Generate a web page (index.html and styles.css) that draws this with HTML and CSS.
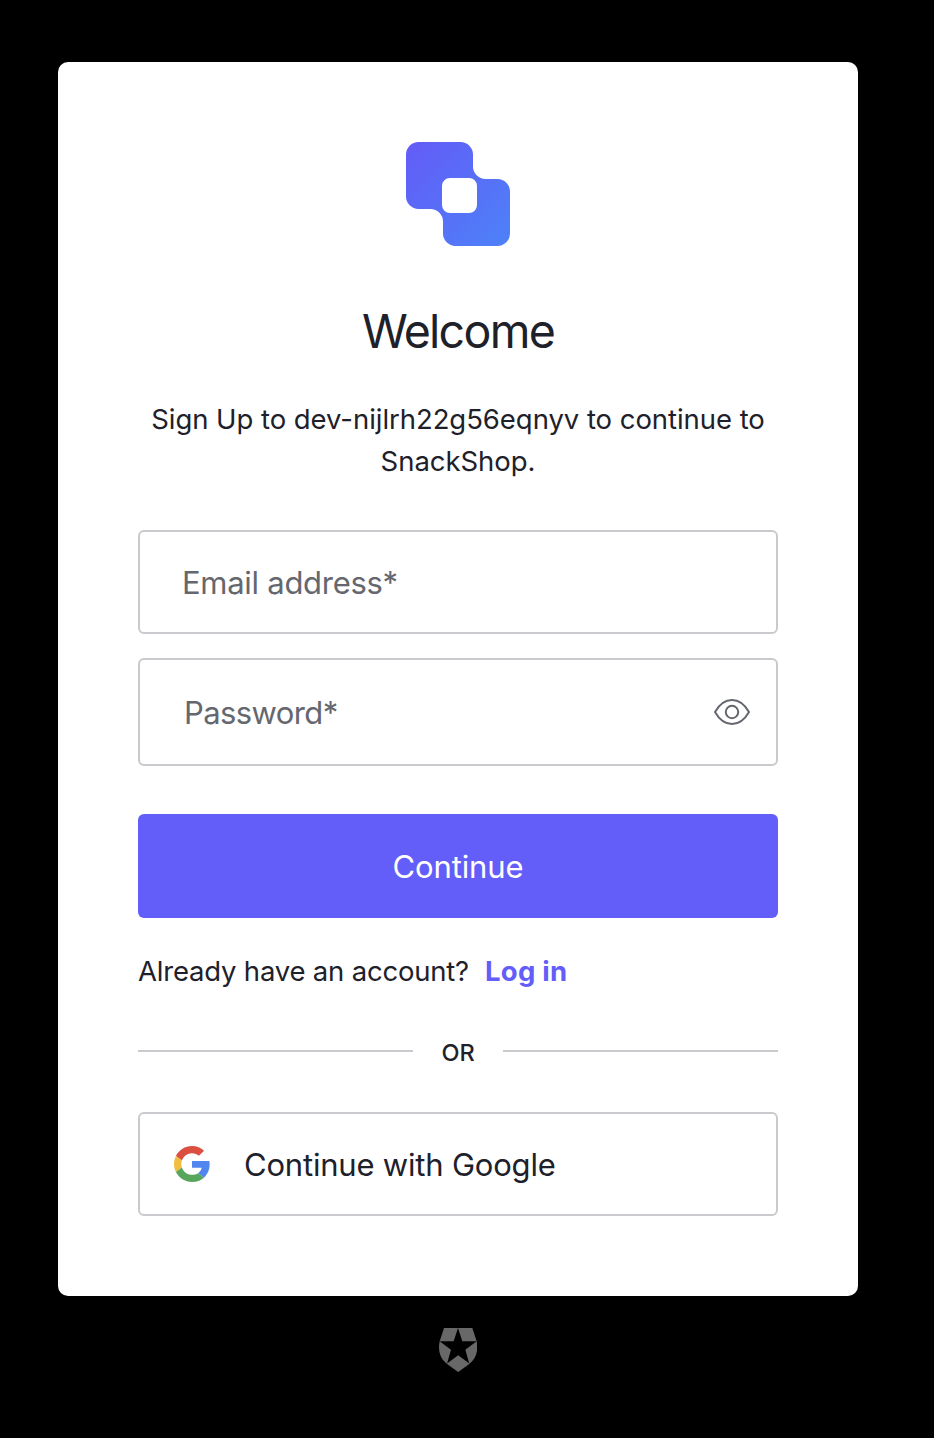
FILE: index.html
```html
<!DOCTYPE html>
<html lang="en">
<head>
<meta charset="utf-8">
<title>Sign Up</title>
<link rel="stylesheet" href="styles.css">
</head>
<body>
<main class="card">
  <svg class="logo" viewBox="0 0 104 104" role="img" aria-label="SnackShop">
    <defs><linearGradient id="brand" x1="0" y1="0" x2="1" y2="1"><stop offset="0" stop-color="#635bf7"/><stop offset="1" stop-color="#4d82f8"/></linearGradient></defs>
    <path fill="url(#brand)" fill-rule="evenodd" d="M12.500 0H54.500A12.500 12.500 0 0 1 67 12.500V24.500A12.500 12.500 0 0 0 79.500 37H91.500A12.500 12.500 0 0 1 104 49.500V91.500A12.500 12.500 0 0 1 91.500 104H49.500A12.500 12.500 0 0 1 37 91.500V79.500A12.500 12.500 0 0 0 24.500 67H12.500A12.500 12.500 0 0 1 0 54.500V12.500A12.500 12.500 0 0 1 12.500 0ZM44 36A8 8 0 0 0 36 44V63A8 8 0 0 0 44 71H63A8 8 0 0 0 71 63V44A8 8 0 0 0 63 36Z"/>
  </svg>
  <h1 class="title">Welcome</h1>
  <p class="intro">Sign Up to dev-nijlrh22g56eqnyv to continue to<br>SnackShop.</p>
  <form class="form">
    <div class="field"><input class="input email" type="email" placeholder="Email address*" aria-label="Email address"></div>
    <div class="field field-password">
      <input class="input password" type="password" placeholder="Password*" aria-label="Password">
      <svg class="eye" viewBox="0 0 36 26" fill="none" stroke="#65676e" stroke-width="2"><path d="M1 13C5 6 11 1 18 1S31 6 35 13C31 20 25 25 18 25S5 20 1 13Z"/><circle cx="18" cy="13" r="6.2"/></svg>
    </div>
    <button class="submit" type="button">Continue</button>
  </form>
  <p class="switch"><span class="question">Already have an account?</span><a class="login" href="#">Log in</a></p>
  <div class="divider"><span>OR</span></div>
  <button class="social" type="button">
    <svg class="google" viewBox="0 0 48 48"><path fill="#db4f40" d="M24 9.5c3.54 0 6.71 1.22 9.21 3.6l6.85-6.85C35.9 2.38 30.47 0 24 0 14.62 0 6.51 5.38 2.56 13.22l7.98 6.19C12.43 13.72 17.74 9.5 24 9.5z"/><path fill="#5186ee" d="M47.5 24.55c0-1.57-.15-3.09-.38-4.55H24v9.02h12.94c-.58 2.96-2.26 5.48-4.78 7.18l7.73 6c4.51-4.18 7.61-10.36 7.61-17.65z"/><path fill="#f2be42" d="M10.53 28.59c-.48-1.45-.76-2.99-.76-4.59s.27-3.14.76-4.59l-7.98-6.19C.92 16.46 0 20.12 0 24c0 3.88.92 7.54 2.56 10.78l7.97-6.19z"/><path fill="#58a55c" d="M24 48c6.48 0 11.93-2.13 15.89-5.81l-7.73-6c-2.15 1.45-4.92 2.3-8.16 2.3-6.26 0-11.57-4.22-13.47-9.91l-7.98 6.19C6.51 42.62 14.62 48 24 48z"/></svg>
    <span class="social-label">Continue with Google</span>
  </button>
</main>
<svg class="badge" viewBox="42 39 114 132" fill="#686868" role="img" aria-label="Auth0"><path d="M57 39H99L86 79H44ZM99 39H142L155 79H112ZM44 79L78 104L66 146C46 132 38 106 44 79ZM155 79L121 104L133 146C153 132 161 106 155 79ZM99.500 121L134 146L99.500 171L65 146Z"/></svg>
</body>
</html>
```
FILE: styles.css
```css
* { box-sizing: border-box; }
body {
  margin: 0;
  min-height: 1438px;
  padding: 62px 76px 0 58px;
  background: #000;
  color: #1e212a;
  font-family: Inter, "Liberation Sans", sans-serif;
  display: flex;
  flex-direction: column;
  align-items: center;
}
.card {
  width: 800px;
  height: 1234px;
  padding: 80px;
  border-radius: 10px;
  background: #fff;
  display: flex;
  flex-direction: column;
}
.logo { width: 104px; height: 104px; align-self: center; }
.title {
  margin: 47px 0 0;
  font-size: 46.500px;
  font-weight: 400;
  line-height: 76px;
  letter-spacing: -1.7px;
  text-align: center;
}
.intro {
  margin: 29px 0 0;
  font-size: 27.500px;
  line-height: 42px;
  letter-spacing: -0.05px;
  text-align: center;
  white-space: nowrap;
}
.form { margin-top: 48px; display: flex; flex-direction: column; }
.field {
  height: 104px;
  border: 2px solid #c9cace;
  border-radius: 6px;
  display: flex;
  align-items: center;
}
.field-password { height: 108px; margin-top: 24px; padding-right: 26px; }
.input {
  flex: 1;
  min-width: 0;
  height: 100%;
  border: 0;
  padding: 0 0 0 42px;
  background: transparent;
  font: 400 31px/40px Inter, "Liberation Sans", sans-serif;
  letter-spacing: -0.28px;
  outline: 0;
}
.password { padding-left: 44px; letter-spacing: -0.6px; }
.input::placeholder { color: #65676e; opacity: 1; }
.eye { width: 36px; height: 26px; }
.submit {
  height: 104px;
  margin-top: 48px;
  padding: 2px 0 0;
  border: 0;
  border-radius: 6px;
  background: #635dfa;
  color: #fff;
  font: 400 31px/40px Inter, "Liberation Sans", sans-serif;
  letter-spacing: -0.12px;
}
.switch { margin: 32px 0 0; display: flex; gap: 16px; font-size: 27.500px; line-height: 42px; white-space: nowrap; }
.question { letter-spacing: -0.2px; }
.login { color: #635dfa; font-weight: 700; letter-spacing: 0.25px; text-decoration: none; }
.divider {
  margin-top: 39px;
  height: 40px;
  display: flex;
  align-items: center;
  justify-content: space-between;
  font-size: 23.500px;
  font-weight: 500;
}
.divider span { padding-top: 2px; }
.divider::before, .divider::after { content: ""; width: 275px; height: 2px; background: #c9cace; }
.social {
  height: 104px;
  margin-top: 41px;
  padding: 0 0 0 34px;
  border: 2px solid #c9cace;
  border-radius: 6px;
  background: #fff;
  color: #1e212a;
  display: flex;
  align-items: center;
  gap: 34px;
  font: 400 31px/40px Inter, "Liberation Sans", sans-serif;
  letter-spacing: -0.2px;
}
.social-label { padding-top: 2px; }
.google { width: 36px; height: 36px; }
.badge { width: 38px; height: 44px; margin-top: 32px; }
```
